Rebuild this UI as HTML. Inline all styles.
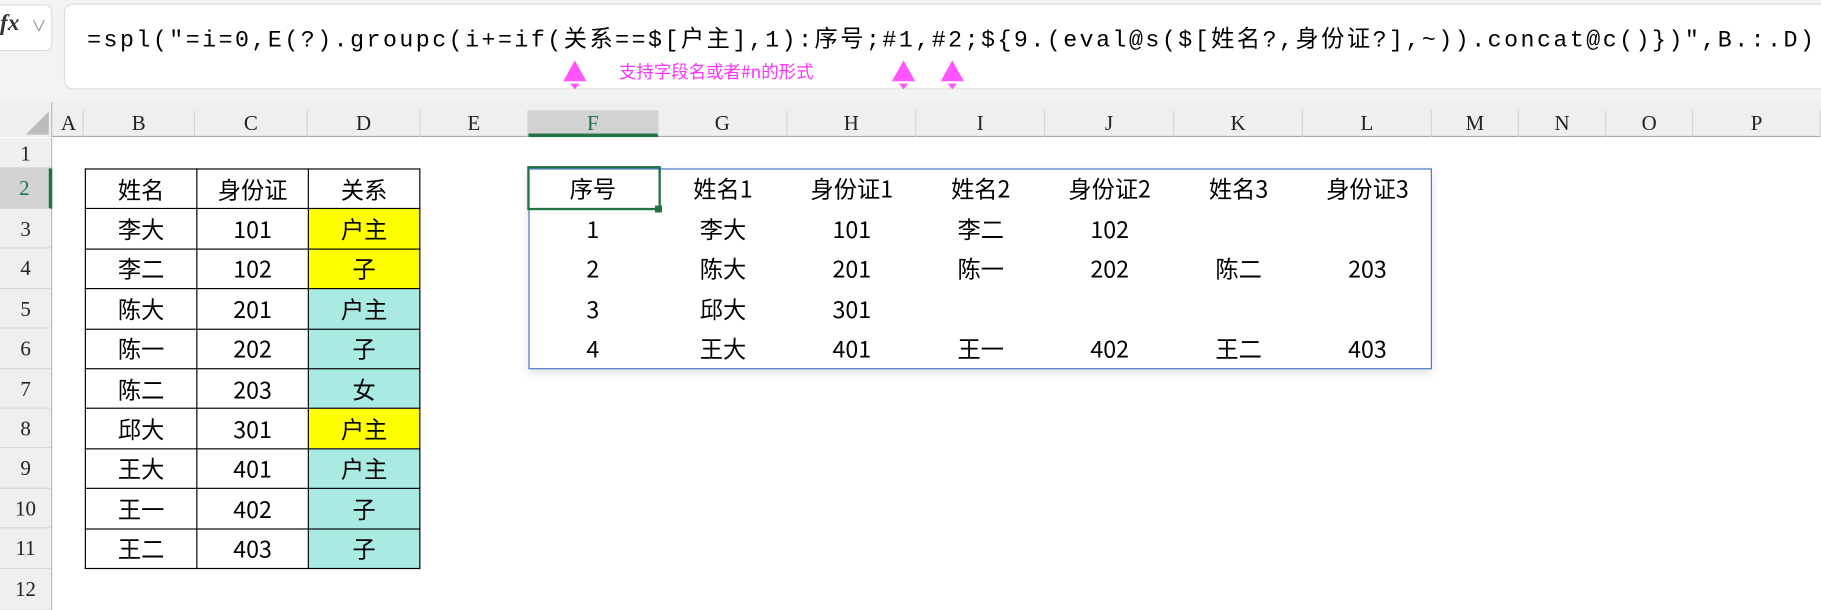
<!DOCTYPE html>
<html><head><meta charset="utf-8"><style>
*{margin:0;padding:0;box-sizing:border-box}
html,body{width:1821px;height:609px;overflow:hidden;background:#fff}
#w{position:absolute;left:0;top:0;width:1568px;height:525px;transform:scale(1.16135);transform-origin:0 0;font-family:"Noto Sans CJK SC","Liberation Sans",sans-serif}
.a{position:absolute}
.top{left:0;top:0;width:1568px;height:88px;background:#f3f3f3}
.fxb{left:-10px;top:4px;width:55px;height:40px;background:#fff;border:1px solid #ddd;border-radius:6px}
.fbox{left:55px;top:3px;width:1530px;height:74px;background:#fff;border:1px solid #ddd;border-radius:8px}
.ftx{left:75px;top:17px;font-family:"Liberation Mono","Noto Sans CJK SC",monospace;font-size:20px;letter-spacing:2.15px;color:#000;white-space:nowrap}
.hdr{left:0;top:88px;width:1568px;height:30px;background:#efefef;border-bottom:1px solid #aaa}
.ch{position:absolute;top:95px;height:23px;text-align:center;font-family:"Liberation Serif",serif;font-size:18px;color:#222;border-right:1px solid #d5d5d5;line-height:23px}
.rh{position:absolute;left:0;width:45px;background:#efefef;border-bottom:1px solid #d5d5d5;border-right:1px solid #bbb;text-align:center;font-family:"Liberation Serif",serif;font-size:18px;color:#222}
.c{position:absolute;text-align:center;font-size:20px;color:#000;line-height:34px}
table.l{position:absolute;left:73px;top:145px;border-collapse:collapse}
table.l td{border:1px solid #000;width:96px;height:34.4px;text-align:center;font-size:20px;padding:0;line-height:32px}
.y{background:#ffff00}.t{background:#a9eae3}
.mag{color:#ff33ff}
</style></head><body><div id="w">
<div class="a top"></div>
<div class="a fxb"></div>
<div class="a" style="left:0;top:9px;font-family:'Liberation Serif',serif;font-style:italic;font-weight:bold;font-size:20px;color:#333">fx</div>
<div class="a" style="left:27px;top:12px;font-size:13px;color:#888">&#8744;</div>
<div class="a fbox"></div>
<div class="a ftx">=spl("=i=0,E(?).groupc(i+=if(关系==$[户主],1):序号;#1,#2;${9.(eval@s($[姓名?,身份证?],~)).concat@c()})",B.:.D)</div>
<svg class="a" style="left:0;top:0" width="1568" height="90">
<g fill="#ff55ff"><polygon points="485,70 495,52 505,70"/><polygon points="491,72 499,72 495,77"/>
<polygon points="768,70 778,52 788,70"/><polygon points="774,72 782,72 778,77"/>
<polygon points="810,70 820,52 830,70"/><polygon points="816,72 824,72 820,77"/></g></svg>
<div class="a mag" style="left:533px;top:51px;font-size:15px">支持字段名或者#n的形式</div>
<div class="a hdr"></div>
<div class="a" style="left:0;top:88px;width:45px;height:30px;background:#efefef;border-right:1px solid #bbb"></div>
<svg class="a" style="left:22px;top:96px" width="22" height="20"><polygon points="20,0 20,20 0,20" fill="#bbb"/></svg>
<div class="ch" style="left:47px;width:25px">A</div>
<div class="ch" style="left:72px;width:96px">B</div>
<div class="ch" style="left:168px;width:97px">C</div>
<div class="ch" style="left:265px;width:97px">D</div>
<div class="ch" style="left:362px;width:93px">E</div>
<div class="ch" style="left:455px;width:112px;background:#d2d2d2;color:#217346;border-bottom:3px solid #217346">F</div>
<div class="ch" style="left:567px;width:111px">G</div>
<div class="ch" style="left:678px;width:111px">H</div>
<div class="ch" style="left:789px;width:111px">I</div>
<div class="ch" style="left:900px;width:111px">J</div>
<div class="ch" style="left:1011px;width:111px">K</div>
<div class="ch" style="left:1122px;width:111px">L</div>
<div class="ch" style="left:1233px;width:75px">M</div>
<div class="ch" style="left:1308px;width:75px">N</div>
<div class="ch" style="left:1383px;width:75px">O</div>
<div class="ch" style="left:1458px;width:110px">P</div>
<div class="rh" style="top:119px;height:26px;line-height:26px">1</div>
<div class="rh" style="top:145px;height:35px;line-height:35px;background:#d2d2d2;color:#217346;border-right:3px solid #217346">2</div>
<div class="rh" style="top:180px;height:34.4px;line-height:34px">3</div>
<div class="rh" style="top:214.4px;height:34.4px;line-height:34px">4</div>
<div class="rh" style="top:248.8px;height:34.4px;line-height:34px">5</div>
<div class="rh" style="top:283.2px;height:34.4px;line-height:34px">6</div>
<div class="rh" style="top:317.6px;height:34.4px;line-height:34px">7</div>
<div class="rh" style="top:352px;height:34.4px;line-height:34px">8</div>
<div class="rh" style="top:386.4px;height:34.4px;line-height:34px">9</div>
<div class="rh" style="top:420.8px;height:34.4px;line-height:34px">10</div>
<div class="rh" style="top:455.2px;height:34.4px;line-height:34px">11</div>
<div class="rh" style="top:489.6px;height:36px;line-height:34px">12</div>
<table class="l">
<tr><td>姓名</td><td>身份证</td><td>关系</td></tr>
<tr><td>李大</td><td>101</td><td class="y">户主</td></tr>
<tr><td>李二</td><td>102</td><td class="y">子</td></tr>
<tr><td>陈大</td><td>201</td><td class="t">户主</td></tr>
<tr><td>陈一</td><td>202</td><td class="t">子</td></tr>
<tr><td>陈二</td><td>203</td><td class="t">女</td></tr>
<tr><td>邱大</td><td>301</td><td class="y">户主</td></tr>
<tr><td>王大</td><td>401</td><td class="t">户主</td></tr>
<tr><td>王一</td><td>402</td><td class="t">子</td></tr>
<tr><td>王二</td><td>403</td><td class="t">子</td></tr>
</table>
<div class="a" style="left:455px;top:145px;width:778px;height:173px;border:1px solid #4472c4;box-shadow:0 3px 8px rgba(0,0,0,.12)"></div>
<div class="a" style="left:454px;top:143px;width:115px;height:38px;border:2px solid #217346"></div>
<div class="a" style="left:564px;top:177px;width:6px;height:6px;background:#217346"></div>
<div id="rt"></div>
<script>
var rows=[["序号","姓名1","身份证1","姓名2","身份证2","姓名3","身份证3"],["1","李大","101","李二","102","",""],["2","陈大","201","陈一","202","陈二","203"],["3","邱大","301","","","",""],["4","王大","401","王一","402","王二","403"]];
var xs=[455,567,678,789,900,1011,1122],ys=[145,180,214.4,248.8,283.2],h="";
rows.forEach(function(r,i){r.forEach(function(t,j){if(t)h+='<div class="c" style="left:'+xs[j]+'px;top:'+ys[i]+'px;width:111px;height:'+(i?34.4:35)+'px">'+t+'</div>';});});
document.getElementById("rt").innerHTML=h;
</script>
</div></body></html>
